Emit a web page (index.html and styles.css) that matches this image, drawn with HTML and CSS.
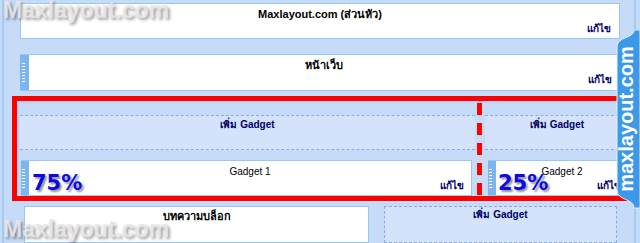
FILE: index.html
```html
<!DOCTYPE html>
<html lang="th">
<head>
<meta charset="utf-8">
<title>Layout editor</title>
<link rel="stylesheet" href="styles.css">
</head>
<body>
<div class="frame">
  <div class="box header">
    <div class="title">Maxlayout.com (ส่วนหัว)</div>
    <div class="edit">แก้ไข</div>
  </div>

  <div class="box widget">
    <div class="handle"><span class="grip"></span></div>
    <div class="body">
      <div class="title">หน้าเว็บ</div>
      <div class="edit">แก้ไข</div>
    </div>
  </div>

  <div class="highlight">
    <div class="hl-inner">
      <div class="col col-main">
        <div class="add">เพิ่ม Gadget</div>
        <div class="box widget gadget g1">
          <div class="handle"><span class="grip"></span></div>
          <div class="body">
            <div class="gtitle">Gadget 1</div>
            <div class="edit">แก้ไข</div>
          </div>
          <span class="pct">75%</span>
        </div>
      </div>
      <div class="col col-side">
        <div class="add">เพิ่ม Gadget</div>
        <div class="box widget gadget g2">
          <div class="handle"><span class="grip"></span></div>
          <div class="body">
            <div class="gtitle">Gadget 2</div>
            <div class="edit">แก้ไข</div>
          </div>
          <span class="pct">25%</span>
        </div>
      </div>
    </div>
    <span class="divider"></span>
  </div>

  <div class="bottom">
    <div class="box blog">
      <div class="title">บทความบล็อก</div>
    </div>
    <div class="add add-b">เพิ่ม Gadget</div>
  </div>
</div>

<div class="watermark wm-top">Maxlayout.com</div>
<div class="watermark wm-bottom">Maxlayout.com</div>

<div class="tab">
  <svg class="tab-shape" width="25" height="180" viewBox="0 0 25 180" aria-hidden="true">
    <path d="M19 0 C19 9 2 6 2 17 L2 160 C2 171 19 168 19 178 L25 178 L25 0 Z" fill="#3c98e8" stroke="#e6f1fd" stroke-width="1"/>
  </svg>
  <span class="tab-text">maxlayout.com</span>
</div>
</body>
</html>
```

FILE: styles.css
```css
* { box-sizing: border-box; }
html, body { margin: 0; padding: 0; }
body {
  width: 640px;
  height: 243px;
  overflow: hidden;
  position: relative;
  background: #c6dbf7;
  font-family: "Liberation Sans", sans-serif;
  color: #000;
}

.frame {
  margin-left: 2px;
  width: 634px;
  height: 243px;
  overflow: hidden;
  border-left: 2px solid #a6cbf3;
  border-right: 2px solid #a6cbf3;
  padding: 3px 14px 0 16px;
}

.box {
  background: #fff;
  border: 1px solid #99c6f4;
}

.header { padding: 4px 8px 3px; }

.title {
  font-weight: bold;
  font-size: 11px;
  line-height: 13px;
  text-align: center;
}

.gtitle {
  font-size: 10px;
  line-height: 13px;
  text-align: center;
}

.edit {
  font-weight: bold;
  font-size: 10px;
  line-height: 12px;
  text-align: right;
  color: #000066;
  margin-top: 2px;
}

.widget {
  display: flex;
  margin-top: 15px;
  border-left: none;
}
.handle {
  width: 9px;
  flex: none;
  background: #7db6ef;
  display: flex;
  align-items: center;
  padding-left: 2px;
}
.grip {
  display: block;
  width: 3px;
  height: 19px;
  background: repeating-linear-gradient(to bottom, #fff 0 1px, transparent 1px 3px);
}
.body {
  flex: 1;
  min-width: 0;
  padding: 4px 7px 4px;
}

.highlight {
  position: relative;
  margin: 5px -14px 0 -8px;
  border: 5px solid #ff0000;
  background: #c6dbf7;
}
.hl-inner {
  display: flex;
  gap: 10px;
  border-top: 2px solid #b4d2f6;
  border-left: 2px solid #b4d2f6;
  padding-left: 1px;
}
.col-main { width: 455px; flex: none; }
.col-side { flex: 1; min-width: 0; }

.add {
  background: #d4e3fb;
  font-weight: bold;
  font-size: 10px;
  line-height: 12px;
  color: #000066;
  text-align: center;
}
.col .add {
  margin-top: 12px;
  height: 35px;
  padding-top: 3px;
  border-top: 1px dashed #8cabee;
  border-bottom: 1px dashed #8cabee;
}

.gadget {
  position: relative;
  margin-top: 10px;
  height: 36px;
}
.g1 { margin-left: 1px; margin-right: 3px; }
.g2 { margin-left: 3px; }
.gadget .handle { width: 8px; padding-left: 1px; }

.pct {
  position: absolute;
  top: 12px;
  left: 11px;
  font-family: "DejaVu Sans", sans-serif;
  font-weight: bold;
  font-size: 21px;
  line-height: 21px;
  color: #0b0be6;
  text-shadow: 2px 2px 2px rgba(60, 60, 60, 0.55);
}
.g2 .pct { left: 10px; }

.divider {
  position: absolute;
  left: 460px;
  top: 2px;
  width: 5px;
  height: 93px;
  background: repeating-linear-gradient(to bottom, #ff0000 0 12px, transparent 12px 20px);
}

.bottom {
  display: flex;
  gap: 15px;
  margin-top: 5px;
  padding-left: 4px;
}
.blog {
  width: 345px;
  flex: none;
  height: 37px;
  padding-top: 3px;
}
.add-b {
  flex: 1;
  margin-right: 3px;
  height: 37px;
  padding-top: 2px;
  border: 1px dashed #8cabee;
}

.watermark {
  position: absolute;
  left: 3px;
  font-family: "Liberation Sans", sans-serif;
  font-weight: bold;
  font-size: 23px;
  line-height: 23px;
  color: rgba(232, 232, 236, 0.9);
  text-shadow: 2px 2px 3px rgba(40, 40, 40, 0.45);
  white-space: nowrap;
}
.wm-top { top: -1px; }
.wm-bottom { top: 218px; }

.tab {
  position: absolute;
  left: 615px;
  top: 30px;
  width: 25px;
  height: 180px;
}
.tab-shape { display: block; }
.tab-text {
  position: absolute;
  left: 11px;
  top: 89px;
  transform: translate(-50%, -50%) rotate(-90deg);
  font-family: "Liberation Sans", sans-serif;
  font-weight: bold;
  font-size: 20px;
  line-height: 20px;
  color: #fff;
  white-space: nowrap;
}
```
